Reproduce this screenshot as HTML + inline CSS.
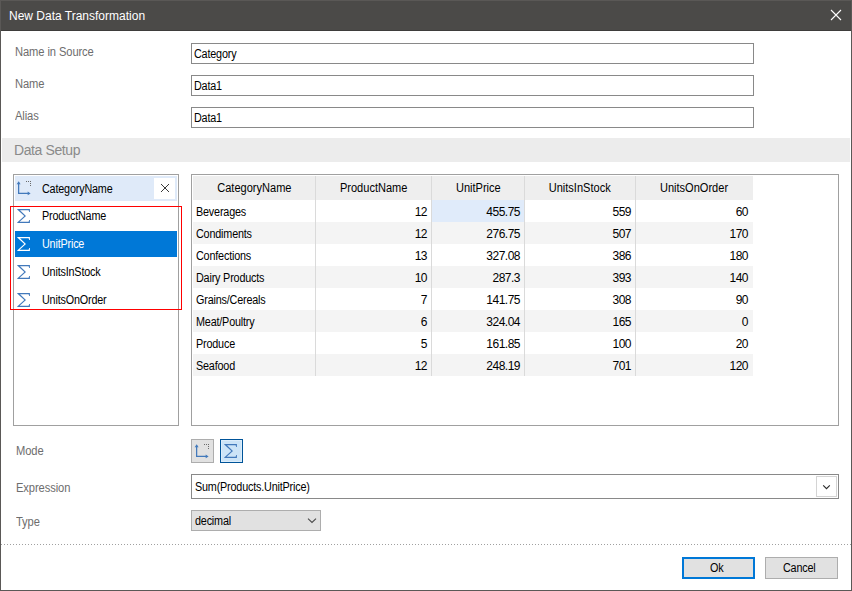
<!DOCTYPE html>
<html><head><meta charset="utf-8">
<style>
*{box-sizing:border-box;margin:0;padding:0}
html,body{width:852px;height:591px;overflow:hidden;background:#fff}
body{position:relative;font-family:"Liberation Sans",sans-serif;font-size:12px;color:#000}
.a{position:absolute}
svg.a{z-index:5}
.t{position:absolute;white-space:nowrap;line-height:14px;font-size:12px;letter-spacing:-0.2px;transform:scaleX(0.9);transform-origin:0 0}
.lbl{position:absolute;white-space:nowrap;line-height:14px;font-size:12px;letter-spacing:-0.1px;transform:scaleX(0.93);transform-origin:0 0;color:#6d6d6d}
.box{position:absolute;border:1px solid #898989;background:#fff}
.sep{position:absolute;top:176px;width:1px;height:200px;background:#dadada}
.row{position:absolute;left:193px;width:560px;height:22px}
.cell{position:absolute;white-space:nowrap;line-height:22px;font-size:12px;letter-spacing:-0.5px}
.hd{letter-spacing:0}
.w{letter-spacing:-0.2px;transform:scaleX(0.9);transform-origin:0 0}
.r{text-align:right}
</style></head><body>
<!-- window frame -->
<div class="a" style="left:0;top:0;width:852px;height:591px;border:1px solid #5a5856"></div>
<div class="a" style="left:1px;top:1px;width:850px;height:29px;background:#4b4a48"></div>
<div class="a" style="left:1px;top:30px;width:850px;height:1px;background:#3e3d3b"></div>
<div class="t" style="left:9px;top:9px;color:#fff;letter-spacing:0;transform:none">New Data Transformation</div>
<svg class="a" style="left:830px;top:9px" width="12" height="12"><path d="M1 1L11 11M11 1L1 11" stroke="#fff" stroke-width="1.1"/></svg>

<!-- top fields -->
<div class="lbl" style="left:14.5px;top:45px">Name in Source</div>
<div class="lbl" style="left:14.5px;top:77px">Name</div>
<div class="lbl" style="left:14.5px;top:109px">Alias</div>
<div class="box" style="left:191px;top:43px;width:563px;height:21px"></div>
<div class="box" style="left:191px;top:75px;width:563px;height:21px"></div>
<div class="box" style="left:191px;top:107px;width:563px;height:21px"></div>
<div class="t" style="left:194px;top:47px">Category</div>
<div class="t" style="left:194px;top:79px">Data1</div>
<div class="t" style="left:194px;top:111px">Data1</div>

<!-- Data setup band -->
<div class="a" style="left:2px;top:138px;width:848px;height:24px;background:#ececec"></div>
<div class="t" style="left:14px;top:142px;font-size:14px;letter-spacing:-0.4px;line-height:16px;color:#8a8a8a;transform:none">Data Setup</div>

<!-- list box -->
<div class="box" style="left:13px;top:174px;width:166px;height:252px;border-color:#a0a0a0"></div>
<div class="a" style="left:15px;top:176px;width:162px;height:25px;background:#dfeaf9"></div>
<div class="a" style="left:154px;top:178px;width:21px;height:21px;background:#fff"></div>
<svg class="a" style="left:160px;top:183px" width="10" height="10"><path d="M1 1L9 9M9 1L1 9" stroke="#3a3a3a" stroke-width="1"/></svg>
<div class="t" style="left:41.6px;top:182px">CategoryName</div>
<div class="a" style="left:15px;top:231px;width:162px;height:26px;background:#0078d7"></div>
<div class="t" style="left:42px;top:209px">ProductName</div>
<div class="t" style="left:42px;top:237px;color:#fff">UnitPrice</div>
<div class="t" style="left:42px;top:265px">UnitsInStock</div>
<div class="t" style="left:42px;top:293px">UnitsOnOrder</div>
<!--icons-->
<svg class="a" style="left:15px;top:180px" width="18" height="17" viewBox="0 0 18 17"><g transform="translate(3 1)" fill="#4279bb"><rect x="0" y="1.5" width="1.25" height="11.5"/><rect x="0" y="11.75" width="10" height="1.25"/><path d="M0.62 0.3L-1.35 3.2L2.6 3.2Z"/><path d="M12.6 12.38L9.7 10.4L9.7 14.35Z"/></g><g transform="translate(3 1)" fill="#6b6b6b"><rect x="8" y="0" width="1" height="1"/><rect x="10" y="0" width="1" height="1"/><rect x="12" y="0" width="1" height="1"/><rect x="12" y="2" width="1" height="1"/><rect x="12" y="4" width="1" height="1"/></g></svg>
<svg class="a" style="left:16px;top:208px" width="16" height="17" viewBox="0 0 16 17"><path transform="translate(1 1)" fill="#4279bb" d="M0.2 0L12.9 0L12.9 2.9L12.2 2.9L11.6 1.25L3.0 1.25L9.0 6.9L2.6 12.65L11.6 12.65L12.2 11L12.9 11L12.9 13.9L0.2 13.9L0.2 13.4L7.3 6.9L0.2 0.6Z"/></svg>
<svg class="a" style="left:16px;top:236px" width="16" height="17" viewBox="0 0 16 17"><path transform="translate(1 1)" fill="#fff" d="M0.2 0L12.9 0L12.9 2.9L12.2 2.9L11.6 1.25L3.0 1.25L9.0 6.9L2.6 12.65L11.6 12.65L12.2 11L12.9 11L12.9 13.9L0.2 13.9L0.2 13.4L7.3 6.9L0.2 0.6Z"/></svg>
<svg class="a" style="left:16px;top:264px" width="16" height="17" viewBox="0 0 16 17"><path transform="translate(1 1)" fill="#4279bb" d="M0.2 0L12.9 0L12.9 2.9L12.2 2.9L11.6 1.25L3.0 1.25L9.0 6.9L2.6 12.65L11.6 12.65L12.2 11L12.9 11L12.9 13.9L0.2 13.9L0.2 13.4L7.3 6.9L0.2 0.6Z"/></svg>
<svg class="a" style="left:16px;top:292px" width="16" height="17" viewBox="0 0 16 17"><path transform="translate(1 1)" fill="#4279bb" d="M0.2 0L12.9 0L12.9 2.9L12.2 2.9L11.6 1.25L3.0 1.25L9.0 6.9L2.6 12.65L11.6 12.65L12.2 11L12.9 11L12.9 13.9L0.2 13.9L0.2 13.4L7.3 6.9L0.2 0.6Z"/></svg>
<svg class="a" style="left:193px;top:443px" width="18" height="17" viewBox="0 0 18 17"><g transform="translate(3 1)" fill="#4279bb"><rect x="0" y="1.5" width="1.25" height="11.5"/><rect x="0" y="11.75" width="10" height="1.25"/><path d="M0.62 0.3L-1.35 3.2L2.6 3.2Z"/><path d="M12.6 12.38L9.7 10.4L9.7 14.35Z"/></g><g transform="translate(3 1)" fill="#6b6b6b"><rect x="8" y="0" width="1" height="1"/><rect x="10" y="0" width="1" height="1"/><rect x="12" y="0" width="1" height="1"/><rect x="12" y="2" width="1" height="1"/><rect x="12" y="4" width="1" height="1"/></g></svg>
<svg class="a" style="left:223px;top:443px" width="16" height="17" viewBox="0 0 16 17"><path transform="translate(1 1)" fill="#4279bb" d="M0.2 0L12.9 0L12.9 2.9L12.2 2.9L11.6 1.25L3.0 1.25L9.0 6.9L2.6 12.65L11.6 12.65L12.2 11L12.9 11L12.9 13.9L0.2 13.9L0.2 13.4L7.3 6.9L0.2 0.6Z"/></svg>
<!--/icons-->
<div class="a" style="left:10px;top:206px;width:172px;height:104px;border:1px solid #f00"></div>

<!-- grid -->
<div class="box" style="left:191px;top:174px;width:648px;height:252px;border-color:#a0a0a0"></div>
<div class="a" style="left:193px;top:176px;width:560px;height:24px;background:#eeeeee"></div>
<div class="row" style="top:222px;background:#f4f4f4"></div>
<div class="row" style="top:266px;background:#f4f4f4"></div>
<div class="row" style="top:310px;background:#f4f4f4"></div>
<div class="row" style="top:354px;background:#f4f4f4"></div>
<div class="a" style="left:432px;top:200px;width:92px;height:22px;background:#e0ebfa"></div>
<div class="sep" style="left:315px"></div>
<div class="sep" style="left:431px"></div>
<div class="sep" style="left:524px"></div>
<div class="sep" style="left:635px"></div>
<!--grid-->
<div class="cell hd" style="left:193px;top:177px;width:122px;text-align:center"><span style="display:inline-block;transform:scaleX(0.92)">CategoryName</span></div>
<div class="cell hd" style="left:316px;top:177px;width:115px;text-align:center"><span style="display:inline-block;transform:scaleX(0.92)">ProductName</span></div>
<div class="cell hd" style="left:432px;top:177px;width:92px;text-align:center"><span style="display:inline-block;transform:scaleX(0.92)">UnitPrice</span></div>
<div class="cell hd" style="left:525px;top:177px;width:110px;text-align:center"><span style="display:inline-block;transform:scaleX(0.92)">UnitsInStock</span></div>
<div class="cell hd" style="left:636px;top:177px;width:117px;text-align:center"><span style="display:inline-block;transform:scaleX(0.92)">UnitsOnOrder</span></div>
<div class="cell w" style="left:196px;top:201px">Beverages</div>
<div class="cell r" style="left:316px;top:201px;width:111px">12</div>
<div class="cell r" style="left:432px;top:201px;width:88px">455.75</div>
<div class="cell r" style="left:525px;top:201px;width:106px">559</div>
<div class="cell r" style="left:636px;top:201px;width:112px">60</div>
<div class="cell w" style="left:196px;top:223px">Condiments</div>
<div class="cell r" style="left:316px;top:223px;width:111px">12</div>
<div class="cell r" style="left:432px;top:223px;width:88px">276.75</div>
<div class="cell r" style="left:525px;top:223px;width:106px">507</div>
<div class="cell r" style="left:636px;top:223px;width:112px">170</div>
<div class="cell w" style="left:196px;top:245px">Confections</div>
<div class="cell r" style="left:316px;top:245px;width:111px">13</div>
<div class="cell r" style="left:432px;top:245px;width:88px">327.08</div>
<div class="cell r" style="left:525px;top:245px;width:106px">386</div>
<div class="cell r" style="left:636px;top:245px;width:112px">180</div>
<div class="cell w" style="left:196px;top:267px">Dairy Products</div>
<div class="cell r" style="left:316px;top:267px;width:111px">10</div>
<div class="cell r" style="left:432px;top:267px;width:88px">287.3</div>
<div class="cell r" style="left:525px;top:267px;width:106px">393</div>
<div class="cell r" style="left:636px;top:267px;width:112px">140</div>
<div class="cell w" style="left:196px;top:289px">Grains/Cereals</div>
<div class="cell r" style="left:316px;top:289px;width:111px">7</div>
<div class="cell r" style="left:432px;top:289px;width:88px">141.75</div>
<div class="cell r" style="left:525px;top:289px;width:106px">308</div>
<div class="cell r" style="left:636px;top:289px;width:112px">90</div>
<div class="cell w" style="left:196px;top:311px">Meat/Poultry</div>
<div class="cell r" style="left:316px;top:311px;width:111px">6</div>
<div class="cell r" style="left:432px;top:311px;width:88px">324.04</div>
<div class="cell r" style="left:525px;top:311px;width:106px">165</div>
<div class="cell r" style="left:636px;top:311px;width:112px">0</div>
<div class="cell w" style="left:196px;top:333px">Produce</div>
<div class="cell r" style="left:316px;top:333px;width:111px">5</div>
<div class="cell r" style="left:432px;top:333px;width:88px">161.85</div>
<div class="cell r" style="left:525px;top:333px;width:106px">100</div>
<div class="cell r" style="left:636px;top:333px;width:112px">20</div>
<div class="cell w" style="left:196px;top:355px">Seafood</div>
<div class="cell r" style="left:316px;top:355px;width:111px">12</div>
<div class="cell r" style="left:432px;top:355px;width:88px">248.19</div>
<div class="cell r" style="left:525px;top:355px;width:106px">701</div>
<div class="cell r" style="left:636px;top:355px;width:112px">120</div>
<!--/grid-->

<!-- mode/expression/type -->
<div class="lbl" style="left:15.6px;top:444px">Mode</div>
<div class="lbl" style="left:15.6px;top:481px">Expression</div>
<div class="lbl" style="left:15.6px;top:515px">Type</div>
<div class="a" style="left:191px;top:439px;width:23px;height:24px;background:#e1e1e1;border:1px solid #adadad"></div>
<div class="a" style="left:220px;top:439px;width:23px;height:24px;background:#cce4f7;border:1px solid #005499;box-shadow:inset 0 0 0 1px #dcedfb"></div>
<div class="box" style="left:191px;top:474px;width:648px;height:25px"></div>
<div class="a" style="left:816px;top:476px;width:21px;height:21px;border:1px solid #d4d4d4"></div>
<div class="t" style="left:195px;top:480px">Sum(Products.UnitPrice)</div>
<div class="a" style="left:191px;top:510px;width:130px;height:21px;background:#e1e1e1;border:1px solid #adadad"></div>
<div class="t" style="left:195px;top:514px">decimal</div>

<svg class="a" style="left:822px;top:484px" width="9" height="6"><path d="M1.2 1.4L4.5 4.6L7.8 1.4" fill="none" stroke="#2a2a2a" stroke-width="1.15"/></svg>
<svg class="a" style="left:307px;top:517px" width="10" height="7"><path d="M1 1.6L5 5.5L9 1.6" fill="none" stroke="#4a4a4a" stroke-width="1.1"/></svg>
<!-- dotted separator -->
<div class="a" style="left:1px;top:544px;width:850px;height:1px;background:repeating-linear-gradient(90deg,#a0a0a0 0 1px,transparent 1px 3px)"></div>

<!-- buttons -->
<div class="a" style="left:682px;top:557px;width:73px;height:22px;background:#e1e1e1;border:2px solid #0078d7"></div>
<div class="t" style="left:710px;top:561px">Ok</div>
<div class="a" style="left:765px;top:557px;width:73px;height:22px;background:#e1e1e1;border:1px solid #adadad"></div>
<div class="t" style="left:783px;top:561px">Cancel</div>
</body></html>
